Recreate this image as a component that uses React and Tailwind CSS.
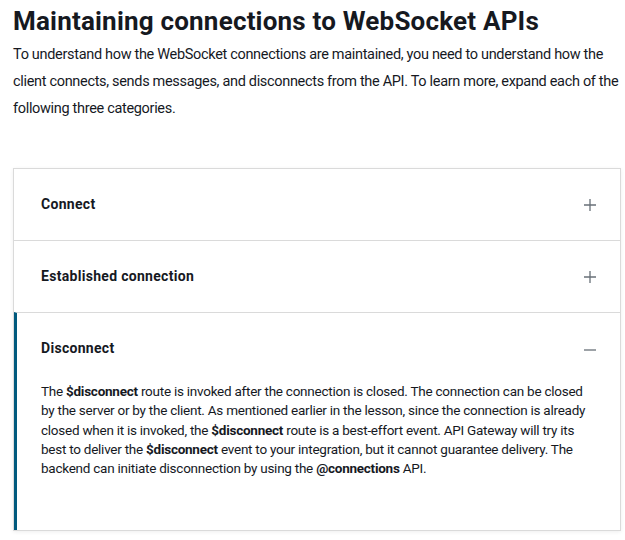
import React, { useState } from 'react';

const sections = [
  { title: 'Connect', body: null },
  { title: 'Established connection', body: null },
  { title: 'Disconnect', body: 'disconnect' },
];

const Plus = () => (
  <svg width="12" height="12" viewBox="0 0 12 12" className="text-[#687078]">
    <path d="M6 0v12M0 6h12" stroke="currentColor" strokeWidth="1.3" />
  </svg>
);

const Minus = () => (
  <svg width="12" height="12" viewBox="0 0 12 12" className="text-[#687078]">
    <path d="M0 7h12" stroke="currentColor" strokeWidth="1.3" />
  </svg>
);

const App = () => {
  const [open, setOpen] = useState(2);

  return (
    <div className="min-h-screen bg-white px-[13px] pt-[3px] text-[#16191f]" style={{ fontFamily: 'Roboto, "Noto Sans", sans-serif' }}>
      <h1 className="text-[26px] font-bold leading-[36px] tracking-[0.2px]">
        Maintaining connections to WebSocket APIs
      </h1>
      <p className="mt-[2px] mr-[-11px] text-[14.5px] leading-[27px] tracking-[-0.32px] text-[#16191f]">
        To understand how the WebSocket connections are maintained, you need to understand how the client connects, sends messages, and disconnects from the API. To learn more, expand each of the following three categories.
      </p>

      <div className="mt-[46px] mr-[-9px] border border-[#dadada] bg-white shadow-[0_1px_4px_rgba(0,0,0,0.07)]">
        {sections.map((s, i) => {
          const isOpen = open === i;
          return (
            <div
              key={s.title}
              className={`${i > 0 ? 'border-t border-t-[#dadada]' : ''} ${isOpen ? 'border-l-[3px] border-l-[#00597d]' : ''}`}
            >
              <button
                onClick={() => setOpen(isOpen ? -1 : i)}
                className={`flex h-[71px] w-full items-center justify-between ${isOpen ? 'pl-[24px]' : 'pl-[27px]'} pr-[24px] text-left`}
              >
                <span className="text-[14px] font-bold tracking-[0.3px] text-[#16191f]">{s.title}</span>
                {isOpen ? <Minus /> : <Plus />}
              </button>
              {isOpen && s.body && (
                <div className="-mt-[2px] pb-[52px] pl-[24px] pr-[24px] text-[13.5px] leading-[19.25px] tracking-[-0.25px] text-[#16191f]">
                  <p>
                    The <b>$disconnect</b> route is invoked after the connection is closed. The connection can be closed by the server or by the client. As mentioned earlier in the lesson, since the connection is already closed when it is invoked, the <b>$disconnect</b> route is a best-effort event. API Gateway will try its best to deliver the <b>$disconnect</b> event to your integration, but it cannot guarantee delivery. The backend can initiate disconnection by using the <b>@connections</b> API.
                  </p>
                </div>
              )}
            </div>
          );
        })}
      </div>
    </div>
  );
};

export default App;
